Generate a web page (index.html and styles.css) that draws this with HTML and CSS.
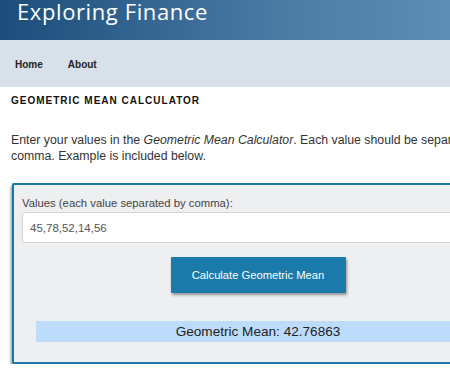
FILE: index.html
```html
<!DOCTYPE html>
<html lang="en">

<head>
  <meta name="viewport" content="width=device-width, initial-scale=1.0">
  <meta charset="utf-8">
  <title>Geometric Mean Calculator</title>

  <link rel="stylesheet" href="styles.css">
</head>

<body>
  <div class="site-header">
    <div class="site-title">Exploring Finance</div>
  </div>
  <div class="site-nav">
    <a href="#">Home</a>
    <a href="#">About</a>
  </div>

  <div class="content">
    <h1 class="entry-title">Geometric Mean Calculator</h1>
    <p class="intro">Enter your values in the <em>Geometric Mean Calculator</em>. Each value should be separated by a comma. Example is included below.</p>

    <div class="calc-box">
      <label class="calc-label" for="values">Values (each value separated by comma):</label>
      <input class="calc-input" id="values" type="text" value="45,78,52,14,56">
      <div class="calc-actions">
        <button class="calc-btn" type="button">Calculate Geometric Mean</button>
      </div>
      <div class="calc-result">Geometric Mean: 42.76863</div>
    </div>
  </div>
</body>

</html>
```

FILE: styles.css
```css
html, body {
  margin: 0;
  padding: 0;
  overflow: hidden;
}

body {
  width: 620px;
  background: #fff;
  font-family: "Liberation Sans", Arial, sans-serif;
  color: #333;
}

.site-header {
  height: 40px;
  background: linear-gradient(to right, #1c4d7b 0%, #4b7aa4 45%, #709fc5 100%);
  overflow: hidden;
}

.site-title {
  padding-left: 17px;
  margin-top: -4px;
  font-family: "Open Sans", sans-serif;
  font-size: 22px;
  line-height: 30px;
  letter-spacing: 0.6px;
  color: #fff;
}

.site-nav {
  height: 47px;
  background: #d8e0e9;
  display: flex;
  align-items: center;
  padding-left: 15px;
  padding-top: 1px;
  box-sizing: border-box;
  gap: 25px;
}

.site-nav a {
  font-size: 10px;
  font-weight: bold;
  color: #222;
  text-decoration: none;
}

.content {
  width: 493px;
  padding-left: 11px;
  padding-top: 7px;
}

.entry-title {
  margin: 0;
  font-size: 10px;
  font-weight: 900;
  line-height: 14px;
  letter-spacing: 1px;
  text-transform: uppercase;
  color: #111;
}

.intro {
  margin: 24px -20px 0 0;
  font-size: 12.3px;
  line-height: 16px;
  color: #333;
}

.calc-box {
  margin-top: 19px;
  margin-left: 1px;
  border: 2px solid #1a77a9;
  border-radius: 2px;
  background: #eeeff1;
  box-shadow: -1px 2px 3px rgba(0, 0, 0, .45);
  padding: 11px 8px 20px;
}

.calc-label {
  display: block;
  font-size: 11.3px;
  line-height: 14px;
  color: #444;
  margin-bottom: 2px;
}

.calc-input {
  display: block;
  box-sizing: border-box;
  width: 100%;
  height: 31px;
  margin: 0;
  padding: 0 7px;
  border: 1px solid #d2d4d6;
  border-radius: 3px;
  background: #fff;
  font-family: "Liberation Sans", Arial, sans-serif;
  font-size: 11.5px;
  color: #555;
}

.calc-actions {
  display: flex;
  justify-content: center;
  padding: 14px 0 28px;
}

.calc-btn {
  width: 175px;
  height: 36px;
  border: none;
  border-radius: 1px;
  background: #1a7aaa;
  color: #fff;
  font-family: "Liberation Sans", Arial, sans-serif;
  font-size: 11.2px;
  box-shadow: 1px 2px 3px rgba(0, 0, 0, .4);
}

.calc-result {
  margin: 0 14px;
  height: 21px;
  line-height: 21px;
  background: #bddbfb;
  text-align: center;
  font-size: 13.6px;
  color: #222;
}
```
